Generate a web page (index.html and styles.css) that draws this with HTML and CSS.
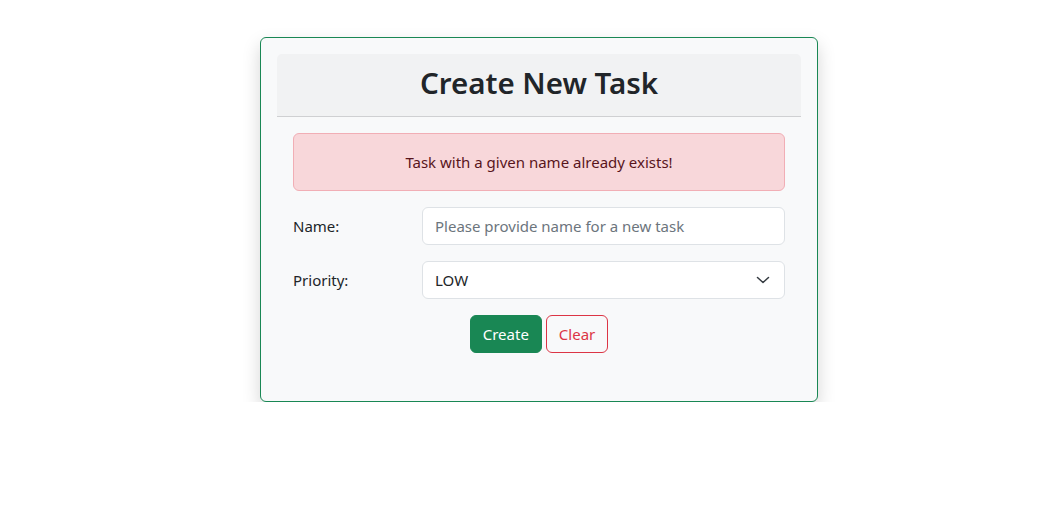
FILE: index.html
```html
<!DOCTYPE html>
<html lang="en">
<head>
<meta charset="utf-8">
<title>Create New Task</title>
<link rel="stylesheet" href="styles.css">
</head>
<body>
<div class="card">
  <div class="card-header">
    <h2 class="title">Create New Task</h2>
  </div>
  <div class="card-body">
    <div class="alert">Task with a given name already exists!</div>
    <div class="form-row">
      <label class="label" for="name">Name:</label>
      <input class="control" id="name" type="text" placeholder="Please provide name for a new task">
    </div>
    <div class="form-row">
      <label class="label">Priority:</label>
      <div class="control select">
        <span>LOW</span>
        <svg class="chevron" width="14" height="8" viewBox="0 0 14 8" aria-hidden="true"><path d="M1.5 1.5 7 6.5 12.5 1.5" fill="none" stroke="#343a40" stroke-width="1.5" stroke-linecap="round" stroke-linejoin="round"/></svg>
      </div>
    </div>
    <div class="actions">
      <button class="btn btn-success" type="button">Create</button>
      <button class="btn btn-outline-danger" type="button">Clear</button>
    </div>
  </div>
</div>
</body>
</html>
```
FILE: styles.css
```css
html, body {
  margin: 0;
  padding: 0;
  background: #fff;
}
body {
  font-family: "Noto Sans", "Open Sans", sans-serif;
  font-size: 15px;
  line-height: 24px;
  color: #212529;
  padding-top: 37px;
}
.card {
  box-sizing: border-box;
  width: 558px;
  margin-left: 260px;
  background: #f8f9fa;
  border: 1px solid #198754;
  border-radius: 6px;
  padding: 16px;
  box-shadow: 0 8px 18px rgba(0, 0, 0, 0.17);
}
.card-header {
  background: #f1f2f3;
  border-bottom: 1px solid #cfd0d2;
  border-radius: 5px 5px 0 0;
  padding: 10px 16px 15px;
  text-align: center;
}
.title {
  margin: 0;
  font-size: 29.5px;
  line-height: 37px;
  font-weight: 600;
  color: #212529;
}
.card-body {
  padding: 16px;
}
.alert {
  background: #f8d7da;
  border: 1px solid #f1aeb5;
  color: #58151c;
  border-radius: 6px;
  padding: 16px;
  text-align: center;
  margin-bottom: 16px;
}
.form-row {
  display: grid;
  grid-template-columns: 129px 1fr;
  align-items: center;
  margin-bottom: 16px;
}
.label {
  color: #212529;
}
.control {
  box-sizing: border-box;
  height: 38px;
  width: 100%;
  font-family: inherit;
  font-size: 15px;
  color: #212529;
  background: #fff;
  border: 1px solid #dee2e6;
  border-radius: 6px;
  padding: 6px 12px;
  outline: none;
}
.control::placeholder {
  color: #6c757d;
}
.select {
  display: flex;
  align-items: center;
  justify-content: space-between;
  padding-right: 14px;
}
.chevron {
  display: block;
}
.actions {
  display: flex;
  justify-content: center;
  gap: 4px;
  margin-bottom: 16px;
}
.btn {
  box-sizing: border-box;
  height: 38px;
  font-family: inherit;
  font-size: 15px;
  line-height: 24px;
  padding: 6px 12px;
  border-radius: 6px;
  border: 1px solid transparent;
  cursor: pointer;
}
.btn-success {
  background: #198754;
  border-color: #198754;
  color: #fff;
}
.btn-outline-danger {
  background: transparent;
  border-color: #dc3545;
  color: #dc3545;
}
```
